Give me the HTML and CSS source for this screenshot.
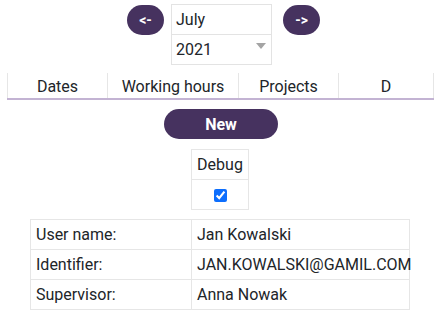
FILE: index.html
```html
<!DOCTYPE html>
<html lang="en">
<head>
    <meta charset="UTF-8">
    <meta name="viewport" content="width=device-width, initial-scale=1.0">
    <title>Working time</title>
    <link rel="stylesheet" href="styles.css">
</head>
<body>
  <div class="month-nav">
      <button class="nav-btn">&lt;-</button>
      <div class="month-box">
          <div class="month-cell">July</div>
          <div class="month-cell year-cell">2021 <span class="caret"></span></div>
      </div>
      <button class="nav-btn next">-&gt;</button>
  </div>

  <div class="tabs">
      <div class="tab t1">Dates</div>
      <div class="tab t2">Working hours</div>
      <div class="tab t3">Projects</div>
      <div class="tab t4">D</div>
  </div>

  <div class="actions">
      <button class="new-btn">New</button>
  </div>

  <table class="debug">
      <tr><td>Debug</td></tr>
      <tr><td><input type="checkbox" checked></td></tr>
  </table>

  <table class="info">
      <tr><td class="lbl">User name:</td><td>Jan Kowalski</td></tr>
      <tr><td class="lbl">Identifier:</td><td>JAN.KOWALSKI@GAMIL.COM</td></tr>
      <tr><td class="lbl">Supervisor:</td><td>Anna Nowak</td></tr>
  </table>
</body>
</html>
```

FILE: styles.css
```css
body {
    font-family: Roboto, "Liberation Sans", sans-serif;
    font-size: 16px;
    color: #212529;
    margin: 0;
    padding: 4px 0 0;
    background: white;
    overflow: hidden;
}

.month-nav {
    display: flex;
    justify-content: center;
    align-items: flex-start;
    gap: 7px;
    margin-left: 7px;
}

.nav-btn {
    width: 37px;
    height: 30px;
    margin-top: 1px;
    background: #46325f;
    color: white;
    border: none;
    border-radius: 15px;
    font-family: Roboto, "Liberation Sans", sans-serif;
    font-size: 14px;
    font-weight: bold;
    padding: 0;
}

.nav-btn.next {
    margin-left: 4px;
}

.month-box {
    width: 99px;
    border: 1px solid #e3e3e3;
}

.month-cell {
    height: 29px;
    line-height: 29px;
    padding-left: 4px;
    position: relative;
}

.year-cell {
    border-top: 1px solid #e3e3e3;
}

.caret {
    position: absolute;
    right: 5px;
    top: 8px;
    width: 0;
    height: 0;
    border-left: 5px solid transparent;
    border-right: 5px solid transparent;
    border-top: 6px solid #a4a4a4;
}

.tabs {
    display: flex;
    margin: 8px 6px 0 7px;
    border-bottom: 2px solid #c3b3d3;
    overflow: hidden;
}

.tab {
    height: 25px;
    line-height: 27px;
    text-align: center;
    border-left: 1px solid #e6e6e6;
    box-sizing: border-box;
}

.t1 { width: 100px; }
.t2 { width: 131px; }
.t3 { width: 100px; }
.t4 { width: 96px; border-right: 1px solid #e6e6e6; }

.actions {
    display: flex;
    justify-content: center;
    margin-top: 9px;
}

.new-btn {
    width: 114px;
    height: 30px;
    margin-left: 2px;
    background: #46325f;
    color: white;
    border: none;
    border-radius: 15px;
    font-family: Roboto, "Liberation Sans", sans-serif;
    font-size: 16px;
    font-weight: bold;
}

table {
    border-collapse: collapse;
    margin: 0 auto;
}

td {
    border: 1px solid #e6e6e6;
    height: 29px;
    padding: 0 5px;
}

.debug {
    margin-top: 10px;
}

.debug td {
    text-align: center;
    padding: 0 5px;
}

.debug input {
    margin: 0;
    width: 13px;
    height: 13px;
    vertical-align: middle;
    accent-color: #0d6efd;
}

.info {
    margin-top: 9px;
    width: 380px;
    table-layout: fixed;
}

.info td {
    white-space: nowrap;
    overflow: visible;
}

.info .lbl {
    width: 150px;
}
```
